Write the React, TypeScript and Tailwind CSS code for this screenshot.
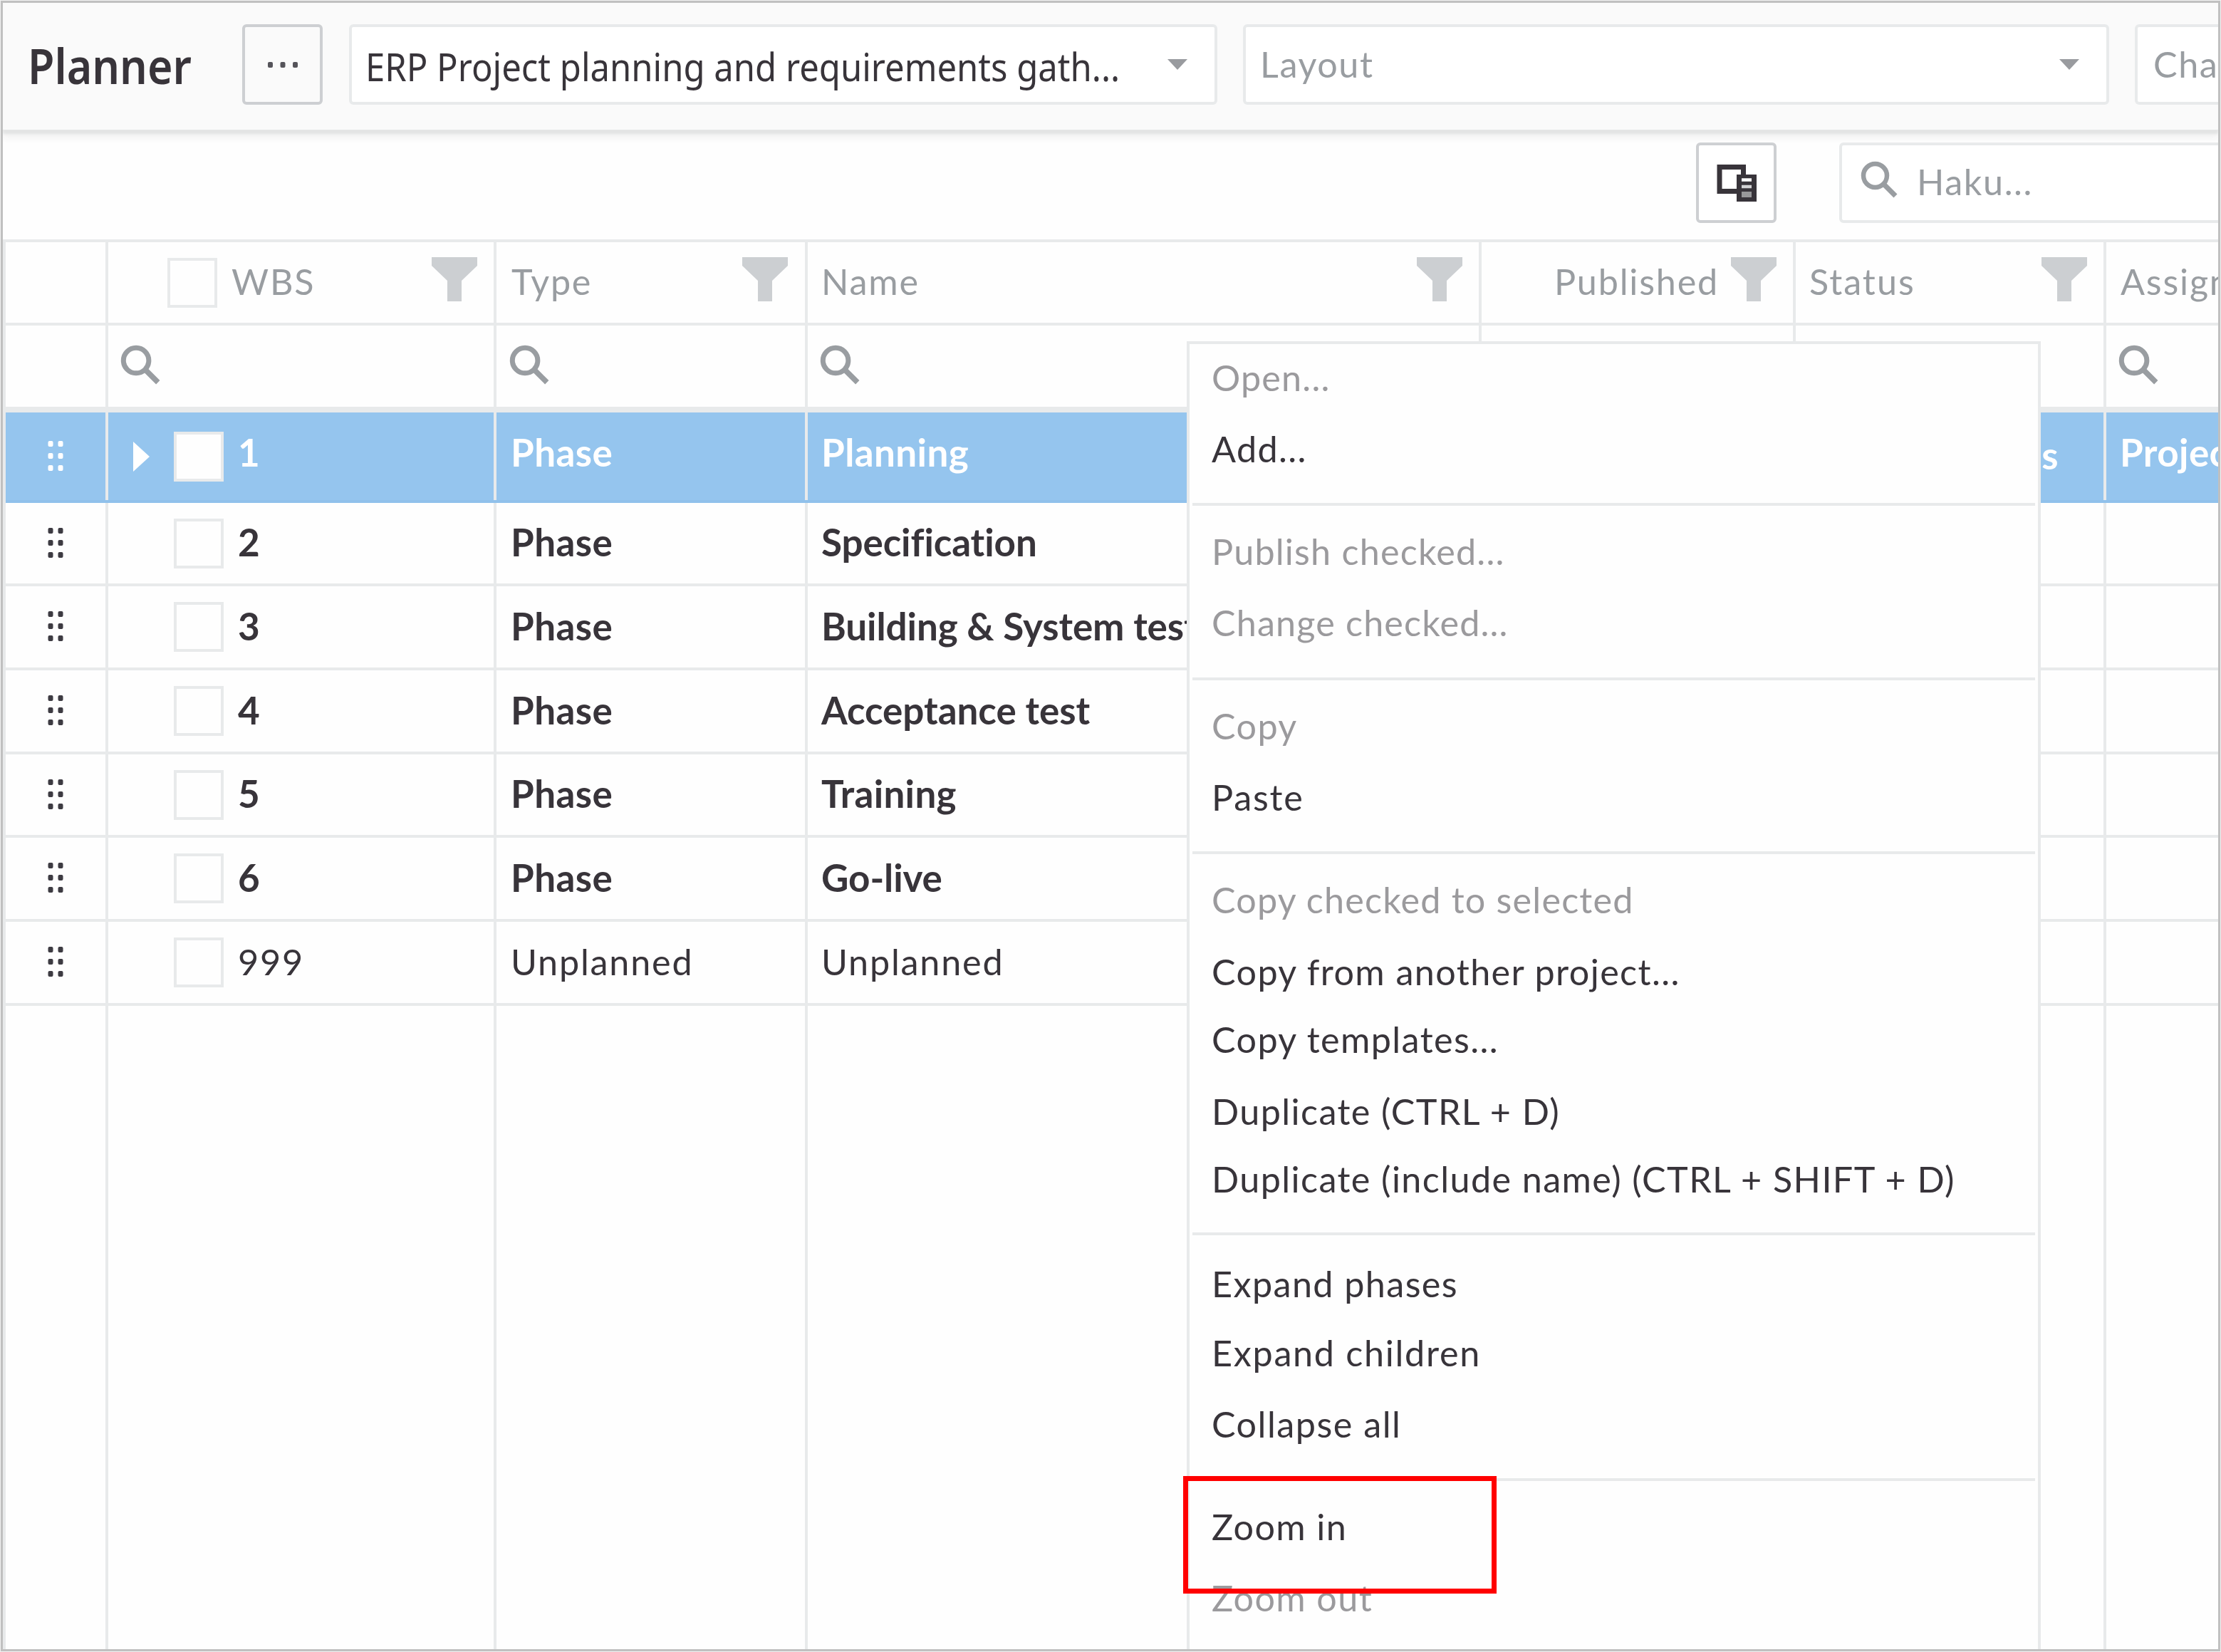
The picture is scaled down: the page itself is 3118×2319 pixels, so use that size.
import type { ReactNode } from "react";
import clsx from "clsx";

function SearchIcon({ className }: { className?: string }) {
  return (
    <svg viewBox="0 0 52 52" className={clsx("shrink-0 text-[#999da1]", className)} fill="none" stroke="currentColor">
      <circle cx="20.5" cy="20.5" r="16.5" strokeWidth="6.5" />
      <path d="M32.5 32.5L49 49" strokeWidth="7" />
    </svg>
  );
}

function FilterIcon() {
  return (
    <svg viewBox="0 0 64 62" className="h-[62px] w-16 shrink-0 -translate-y-[5px] text-[#cccfd2]" fill="currentColor">
      <path d="M0 0H64V12L42 33V62H22V33L0 12Z" />
    </svg>
  );
}

function DevicesIcon() {
  return (
    <svg viewBox="0 0 56 53" className="h-[53px] w-14 text-[#38343a]" fill="none" stroke="currentColor">
      <path d="M28 38.500H4V4.500H37.500V15" strokeWidth="7" />
      <path d="M28 15H56V53H28Z" fill="currentColor" stroke="none" />
      <path d="M35 22.500H49" stroke="#fff" strokeWidth="4.500" />
      <path d="M35 32H49" stroke="#d2d2d4" strokeWidth="4.500" />
      <path d="M35 43H49" stroke="#98989a" strokeWidth="8" />
    </svg>
  );
}

function DragHandle({ light }: { light?: boolean }) {
  return (
    <svg
      viewBox="0 0 24 44"
      className={clsx("h-11 w-6 -translate-y-px", light ? "text-white" : "text-[#3d3b42]")}
      fill="currentColor"
    >
      {[5, 22, 39].map((y) => (
        <g key={y}>
          <rect x="1.500" y={y - 4} width="7" height="8" rx="2" />
          <rect x="15.500" y={y - 4} width="7" height="8" rx="2" />
        </g>
      ))}
    </svg>
  );
}

function Checkbox({ className }: { className?: string }) {
  return <span className={clsx("size-[70px] shrink-0 border-4 border-[#e8eaeb] bg-[#fefefe]", className)} />;
}

function Select({ children, className }: { children: ReactNode; className?: string }) {
  return (
    <div className={clsx("flex h-[113px] shrink-0 items-center justify-between rounded-md border-4 border-[#e8eaeb] bg-white", className)}>
      {children}
      <svg viewBox="0 0 28 15" className="mr-[38px] h-[15px] w-7 shrink-0 text-[#999b9f]" fill="currentColor">
        <path d="M0 0H28L14 15Z" />
      </svg>
    </div>
  );
}

const COLS = [
  "w-[144px]",
  "w-[545px]",
  "w-[437px]",
  "w-[946px]",
  "w-[441px]",
  "w-[436px]",
  "w-[157px]",
];

function Cell({ col, children, className }: { col: number; children?: ReactNode; className?: string }) {
  return (
    <div
      className={clsx(
        "flex h-full shrink-0 items-center overflow-hidden whitespace-nowrap",
        COLS[col],
        col < 6 && "border-r-4 border-[#e8eaeb]",
        className,
      )}
    >
      {children}
    </div>
  );
}

function HeaderLabel({ children, className }: { children: ReactNode; className?: string }) {
  return <span className={clsx("-translate-y-px text-[#999da1]", className)}>{children}</span>;
}

type Row = { wbs: string; type: string; name: string; height: string; track?: string; plain?: boolean };

const ROWS: Row[] = [
  { wbs: "2", type: "Phase", name: "Specification", height: "h-[117px]", track: "tracking-[-0.1px]" },
  { wbs: "3", type: "Phase", name: "Building & System testing", height: "h-[118px]", track: "tracking-[-0.1px]" },
  { wbs: "4", type: "Phase", name: "Acceptance test", height: "h-[118px]", track: "tracking-[-0.05px]" },
  { wbs: "5", type: "Phase", name: "Training", height: "h-[117px]", track: "tracking-[0.3px]" },
  { wbs: "6", type: "Phase", name: "Go-live", height: "h-[118px]", track: "tracking-[-0.1px]" },
  { wbs: "999", type: "Unplanned", name: "Unplanned", height: "h-[118px]", plain: true },
];

function DataRow({ row }: { row: Row }) {
  const text = row.plain ? "-translate-y-px" : "-translate-y-0.5 text-[53px] font-bold";
  const track = row.plain ? "tracking-[1.8px]" : "tracking-[0.4px]";
  return (
    <div className={clsx("flex border-b-4 border-[#e8eaeb]", row.height)}>
      <Cell col={0} className="pl-[58px]">
        <DragHandle />
      </Cell>
      <Cell col={1} className="pl-[92px]">
        <Checkbox />
        <span className={clsx("ml-5", text, track)}>{row.wbs}</span>
      </Cell>
      <Cell col={2} className="pl-5">
        <span className={clsx(text, track)}>{row.type}</span>
      </Cell>
      <Cell col={3} className="pl-[19px]">
        <span className={clsx(text, row.track ?? track)}>{row.name}</span>
      </Cell>
      <Cell col={4} />
      <Cell col={5} />
      <Cell col={6} />
    </div>
  );
}

type Item = { label: string; height: string; off?: boolean; track?: string };

const MENU: { gap: string; items: Item[] }[] = [
  {
    gap: "mb-[17px]",
    items: [
      { label: "Open...", height: "h-[100px]", off: true, track: "tracking-[1.2px]" },
      { label: "Add...", height: "h-[123px]" },
    ],
  },
  {
    gap: "mb-[17px]",
    items: [
      { label: "Publish checked...", height: "h-[100px]", off: true, track: "tracking-[1.2px]" },
      { label: "Change checked...", height: "h-[124px]", off: true, track: "tracking-[1.15px]" },
    ],
  },
  {
    gap: "mb-[17px]",
    items: [
      { label: "Copy", height: "h-[100px]", off: true },
      { label: "Paste", height: "h-[123px]", track: "tracking-[1.8px]" },
    ],
  },
  {
    gap: "mb-[21px]",
    items: [
      { label: "Copy checked to selected", height: "h-[101px]", off: true, track: "tracking-[1.2px]" },
      { label: "Copy from another project...", height: "h-[95px]" },
      { label: "Copy templates...", height: "h-[101px]" },
      { label: "Duplicate (CTRL + D)", height: "h-[95px]" },
      { label: "Duplicate (include name) (CTRL + SHIFT + D)", height: "h-[122px]" },
    ],
  },
  {
    gap: "mb-[21px]",
    items: [
      { label: "Expand phases", height: "h-[97px]" },
      { label: "Expand children", height: "h-[100px]", track: "tracking-[1.7px]" },
      { label: "Collapse all", height: "h-[123px]", track: "tracking-[1.5px]" },
    ],
  },
  {
    gap: "",
    items: [
      { label: "Zoom in", height: "h-[100px]" },
      { label: "Zoom out", height: "h-[118px]", off: true },
    ],
  },
];

const GAPS = ["mb-[17px]", "mb-[17px]", "mb-[17px]", "mb-[21px]", "mb-[17px]"];

function ContextMenu() {
  return (
    <div className="absolute top-[475px] left-[1662px] h-[1836px] w-[1199px] overflow-hidden border-4 border-b-0 border-[#e8eaeb] bg-[#fefefe] px-1">
      {MENU.map((group, g) => (
        <div key={g}>
          {group.items.map((it) => (
            <div
              key={it.label}
              className={clsx(
                "pl-[27px] leading-[94px] whitespace-nowrap",
                it.height,
                it.track ?? "tracking-[1.4px]",
                it.off ? "text-[#9b9a9d]" : "text-[#38343a]",
              )}
            >
              {it.label}
            </div>
          ))}
          {g < GAPS.length && <div className={clsx("h-1 bg-[#e8eaeb]", GAPS[g])} />}
        </div>
      ))}
    </div>
  );
}

export default function App() {
  return (
    <div className="h-[2319px] w-[3118px] overflow-hidden bg-[#f1f1f1] p-px font-['Lato',sans-serif] text-[50.3px] leading-none text-[#38343a] [font-variant-ligatures:none]">
      <div className="relative flex h-[2317px] w-[3116px] flex-col overflow-hidden border-[3px] border-[#c0c0c0] bg-[#fefefe]">
        <header className="relative z-10 flex h-[179px] shrink-0 border-b border-[#e6e7e7] bg-[#fafafa] pt-[30px] shadow-[0_5px_3px_#e3e4e4,0_12px_8px_#f3f3f3]">
          <h1 className="ml-[35px] w-[301px] shrink-0 pt-[28px] font-['Noto_Sans',sans-serif] text-[68px] leading-[60px] font-semibold">
            <span className="inline-block origin-left scale-x-[0.895]">Planner</span>
          </h1>
          <button className="flex size-[113px] shrink-0 items-center justify-center rounded-md border-4 border-[#cdcfd2]">
            <svg viewBox="0 0 44 8" className="h-2 w-11" fill="#55545a">
              <rect x="1" y="0" width="7" height="8" rx="2" />
              <rect x="18.500" y="0" width="7" height="8" rx="2" />
              <rect x="36" y="0" width="7" height="8" rx="2" />
            </svg>
          </button>
          <Select className="ml-[37px] w-[1219px]">
            <span className="ml-[19px] w-[1080px] translate-y-[2px] whitespace-nowrap font-['Noto_Sans',sans-serif] text-[54px]">
              <span className="inline-block origin-left scale-x-[0.907]">
                ERP Project planning and requirements gath...
              </span>
            </span>
          </Select>
          <Select className="ml-[36px] w-[1216px]">
            <span className="ml-[20px] tracking-[1.6px] text-[#999da1]">Layout</span>
          </Select>
          <Select className="ml-[36px] w-[1216px]">
            <span className="ml-[22px] tracking-[1.6px] text-[#999da1]">Change</span>
          </Select>
        </header>

        <div className="flex h-[153px] shrink-0 items-start pt-[17px] pl-[2377px]">
          <button className="flex size-[113px] shrink-0 items-center justify-center rounded-md border-4 border-[#cdcfd2] bg-white">
            <DevicesIcon />
          </button>
          <div className="ml-[88px] flex h-[113px] w-[800px] shrink-0 items-center rounded-md border-4 border-[#e8eaeb] bg-white pl-[26px]">
            <SearchIcon className="size-[52px] -translate-y-[5px]" />
            <span className="ml-[27px] -translate-y-px tracking-[1.6px] text-[#999da1]">Haku...</span>
          </div>
        </div>

        <main className="flex w-[3110px] flex-1 flex-col border-t-4 border-l-4 border-[#e8eaeb]">
          <div className="flex h-[117px] shrink-0 border-b-4 border-[#e8eaeb] tracking-[1.8px]">
            <Cell col={0} />
            <Cell col={1} className="justify-between pr-[23px] pl-[83px]">
              <span className="flex items-center">
                <Checkbox />
                <HeaderLabel className="ml-5">WBS</HeaderLabel>
              </span>
              <FilterIcon />
            </Cell>
            <Cell col={2} className="justify-between pr-6 pl-[21px]">
              <HeaderLabel>Type</HeaderLabel>
              <FilterIcon />
            </Cell>
            <Cell col={3} className="justify-between pr-[23px] pl-[19px]">
              <HeaderLabel>Name</HeaderLabel>
              <FilterIcon />
            </Cell>
            <Cell col={4} className="justify-end pr-[23px]">
              <HeaderLabel className="mr-[17px]">Published</HeaderLabel>
              <FilterIcon />
            </Cell>
            <Cell col={5} className="justify-between pr-[23px] pl-[19px] tracking-[2px]">
              <HeaderLabel>Status</HeaderLabel>
              <FilterIcon />
            </Cell>
            <Cell col={6} className="pl-5">
              <HeaderLabel>Assigned</HeaderLabel>
            </Cell>
          </div>

          <div className="flex h-[122px] shrink-0 border-b-8 border-[#e8eaeb]">
            <Cell col={0} />
            <Cell col={1} className="pl-[17px]">
              <SearchIcon className="size-14 -translate-y-0.5" />
            </Cell>
            <Cell col={2} className="pl-[18px]">
              <SearchIcon className="size-14 -translate-y-0.5" />
            </Cell>
            <Cell col={3} className="pl-[17px]">
              <SearchIcon className="size-14 -translate-y-0.5" />
            </Cell>
            <Cell col={4} />
            <Cell col={5} />
            <Cell col={6} className="pl-[17px]">
              <SearchIcon className="size-14 -translate-y-0.5" />
            </Cell>
          </div>

          <div className="flex h-[127px] shrink-0 border-b-4 border-[#90c1eb] bg-[#95c5ee] text-[53px] font-bold tracking-[0.4px] text-white">
            <Cell col={0} className="pl-[58px]">
              <DragHandle light />
            </Cell>
            <Cell col={1} className="pl-[35px]">
              <svg viewBox="0 0 23 42" className="h-[42px] w-[23px] shrink-0" fill="currentColor">
                <path d="M0 0L23 21L0 42Z" />
              </svg>
              <Checkbox className="ml-[34px]" />
              <span className="ml-5 -translate-y-[6px]">1</span>
            </Cell>
            <Cell col={2} className="pl-5">
              <span className="-translate-y-[6px]">Phase</span>
            </Cell>
            <Cell col={3} className="pl-[19px]">
              <span className="-translate-y-[6px]">Planning</span>
            </Cell>
            <Cell col={4} />
            <Cell col={5} className="justify-end pr-[63px]">
              <span className="-translate-y-0.5">In progress</span>
            </Cell>
            <Cell col={6} className="pl-[19px]">
              <span className="-translate-y-[6px]">Project</span>
            </Cell>
          </div>

          {ROWS.map((row) => (
            <DataRow key={row.wbs} row={row} />
          ))}

          <div className="flex flex-1">
            {COLS.map((_, i) => (
              <Cell key={i} col={i} className="self-stretch" />
            ))}
          </div>
        </main>

        <ContextMenu />
        <div className="absolute top-[2068px] left-[1657px] h-[165px] w-[440px] border-[7px] border-[#ff0000]" />
      </div>
    </div>
  );
}
